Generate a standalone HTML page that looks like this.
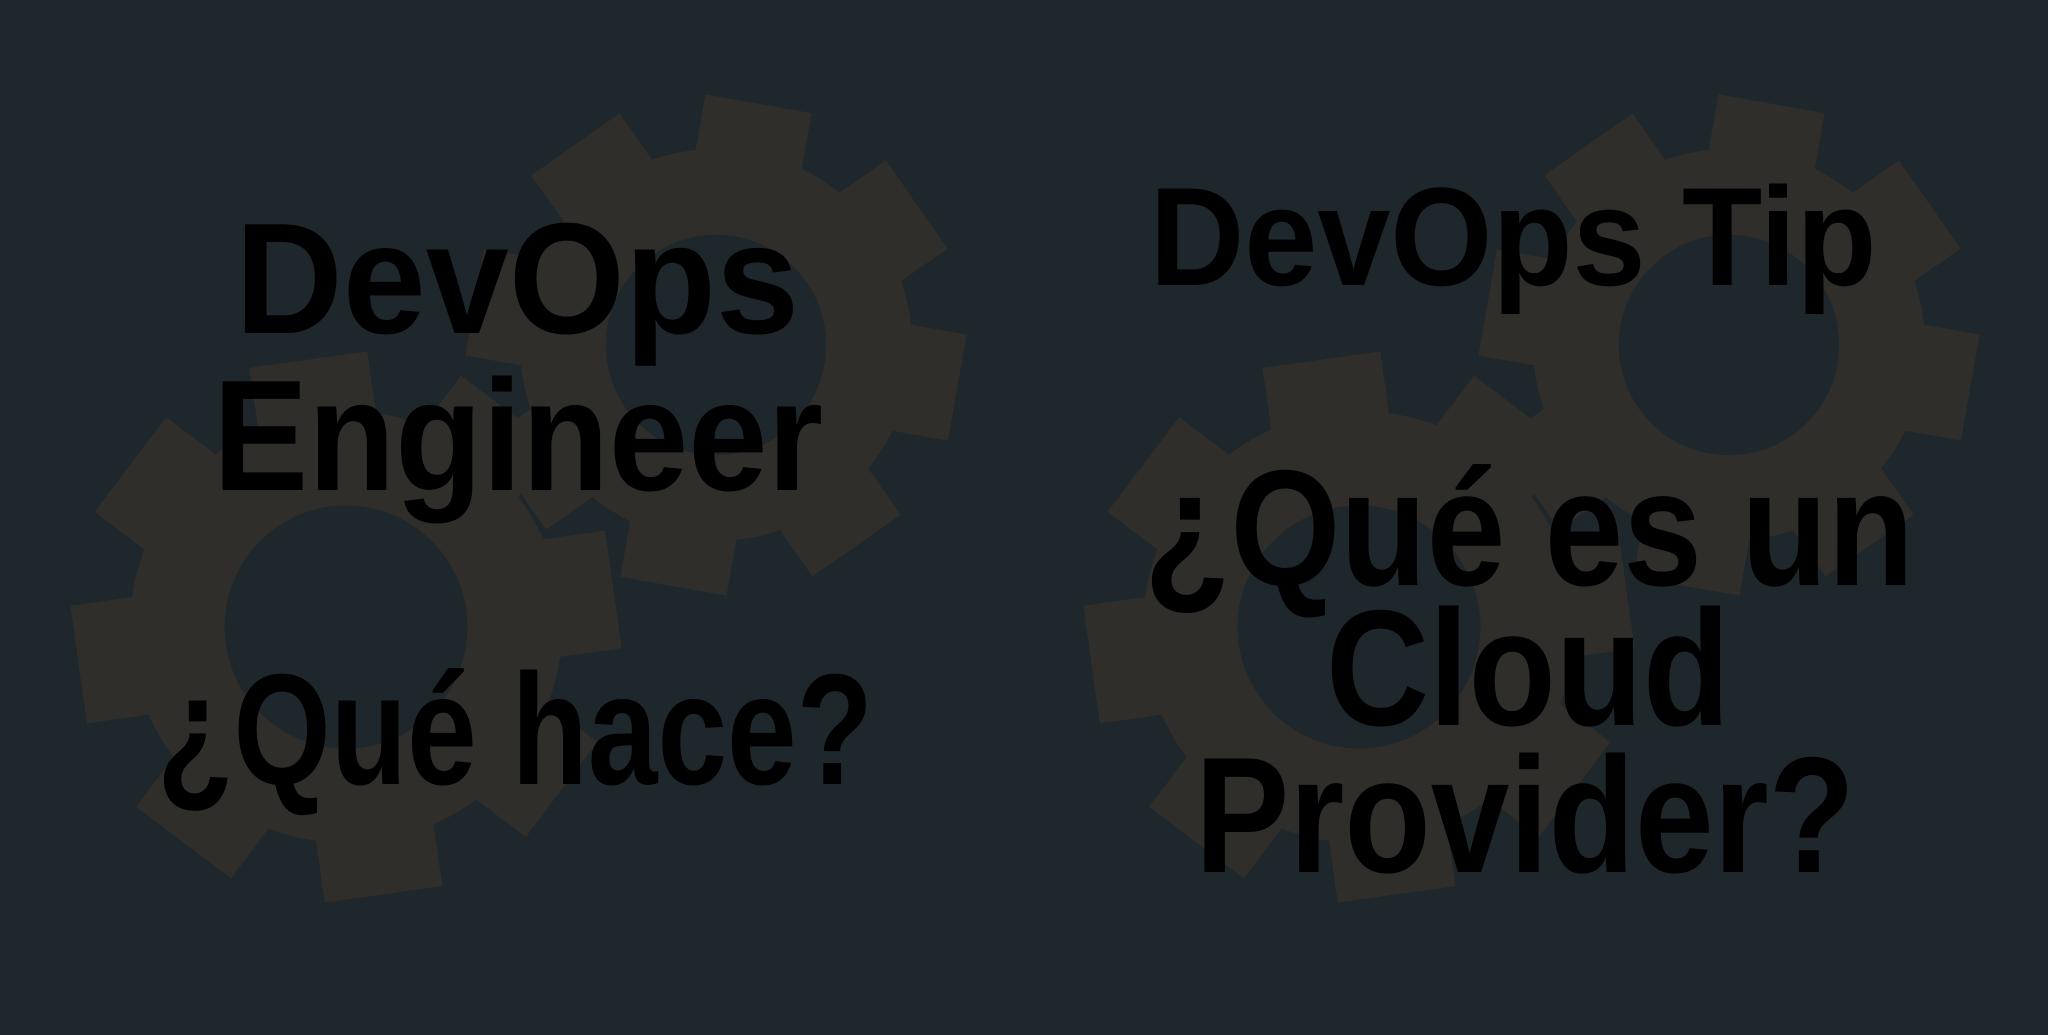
<!DOCTYPE html>
<html><head><meta charset="utf-8"><style>
html,body{margin:0;padding:0;background:#1e272b;width:2048px;height:1035px;overflow:hidden}
svg{display:block}
text{font-family:"Liberation Sans",sans-serif;font-weight:bold;fill:#000}
</style></head><body>
<svg width="2048" height="1035" viewBox="0 0 2048 1035">
<defs>
<g id="gear">
<circle r="80" fill="#302e2a"/>
<g fill="#302e2a">
<rect x="-22" y="-100" width="44" height="30"/>
<rect x="-22" y="-100" width="44" height="30" transform="rotate(45)"/>
<rect x="-22" y="-100" width="44" height="30" transform="rotate(90)"/>
<rect x="-22" y="-100" width="44" height="30" transform="rotate(135)"/>
<rect x="-22" y="-100" width="44" height="30" transform="rotate(180)"/>
<rect x="-22" y="-100" width="44" height="30" transform="rotate(225)"/>
<rect x="-22" y="-100" width="44" height="30" transform="rotate(270)"/>
<rect x="-22" y="-100" width="44" height="30" transform="rotate(315)"/>
</g>
<circle r="45" fill="#1e272b"/>
</g>
</defs>
<rect width="2048" height="1035" fill="#1e272b"/>
<use href="#gear" transform="translate(716,345) scale(2.45) rotate(10)"/>
<use href="#gear" transform="translate(346,627) scale(2.7) rotate(-8)"/>
<use href="#gear" transform="translate(1729,345) scale(2.45) rotate(10)"/>
<use href="#gear" transform="translate(1359,627) scale(2.7) rotate(-8)"/>

<text x="517" y="333" font-size="158" text-anchor="middle" textLength="564" lengthAdjust="spacingAndGlyphs">DevOps</text>
<text x="518" y="490" font-size="158" text-anchor="middle" textLength="610" lengthAdjust="spacingAndGlyphs">Engineer</text>
<text x="515" y="784" font-size="158" text-anchor="middle" textLength="716" lengthAdjust="spacingAndGlyphs">¿Qué hace?</text>

<text x="1513" y="285" font-size="140" text-anchor="middle" textLength="727" lengthAdjust="spacingAndGlyphs">DevOps Tip</text>
<text x="1529" y="585" font-size="165" text-anchor="middle" textLength="770" lengthAdjust="spacingAndGlyphs">¿Qué es un</text>
<text x="1528" y="725" font-size="165" text-anchor="middle" textLength="404" lengthAdjust="spacingAndGlyphs">Cloud</text>
<text x="1525" y="872" font-size="165" text-anchor="middle" textLength="660" lengthAdjust="spacingAndGlyphs">Provider?</text>
</svg>
</body></html>
